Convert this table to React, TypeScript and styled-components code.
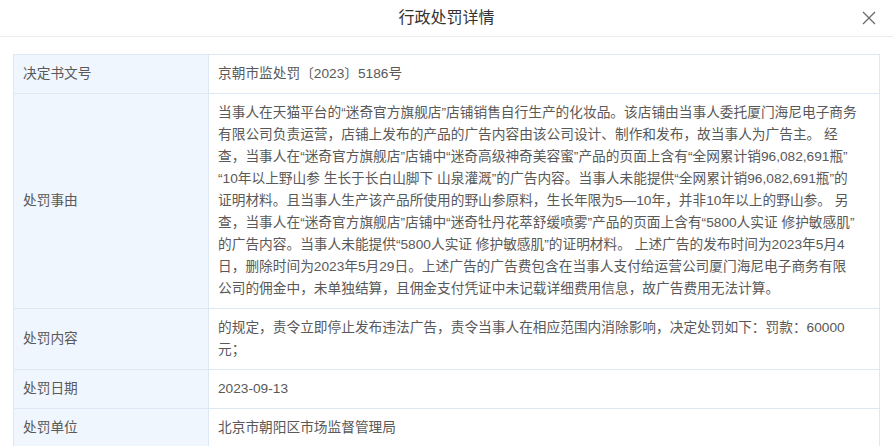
import React from "react";
import styled, { createGlobalStyle } from "styled-components";

const Global = createGlobalStyle`
  html, body { margin: 0; padding: 0; background: #fff; }
  body { font-family: "Liberation Sans", "Noto Sans CJK SC", sans-serif; }
`;

const Dialog = styled.div`
  width: 893px;
  height: 446px;
  overflow: hidden;
  background: #fff;
  display: flex;
  flex-direction: column;
`;

const Header = styled.div`
  height: 36px;
  border-bottom: 1px solid #ececec;
  display: flex;
  align-items: center;
  justify-content: center;
  position: relative;
  flex-shrink: 0;
`;

const Title = styled.div`
  font-size: 16px;
  color: #333;
  line-height: 36px;
`;

const Close = styled.button`
  position: absolute;
  right: 16px;
  top: 10px;
  width: 16px;
  height: 16px;
  padding: 0;
  border: none;
  background: transparent;
  display: flex;
  align-items: center;
  justify-content: center;
`;

const Body = styled.div`
  padding: 17px 13px 0 13px;
`;

const Table = styled.div`
  border: 1px solid #dde8f4;
  border-bottom: none;
  display: grid;
  grid-template-columns: 195px 1fr;
`;

const Label = styled.div`
  background: #f0f6fd;
  border-right: 1px solid #dde8f4;
  border-bottom: 1px solid #dde8f4;
  padding: 8px 9px;
  font-size: 13.7px;
  line-height: 22px;
  color: #595959;
  display: flex;
  align-items: center;
`;

const Value = styled.div`
  border-bottom: 1px solid #dde8f4;
  padding: 8px 8px 8px 9px;
  font-size: 13.7px;
  line-height: 22px;
  color: #595959;
  white-space: pre-line;
`;

const reason = [
  "当事人在天猫平台的“迷奇官方旗舰店”店铺销售自行生产的化妆品。该店铺由当事人委托厦门海尼电子商务",
  "有限公司负责运营，店铺上发布的产品的广告内容由该公司设计、制作和发布，故当事人为广告主。 经",
  "查，当事人在“迷奇官方旗舰店”店铺中“迷奇高级神奇美容蜜”产品的页面上含有“全网累计销96,082,691瓶”",
  "“10年以上野山参 生长于长白山脚下 山泉灌溉”的广告内容。当事人未能提供“全网累计销96,082,691瓶”的",
  "证明材料。且当事人生产该产品所使用的野山参原料，生长年限为5—10年，并非10年以上的野山参。 另",
  "查，当事人在“迷奇官方旗舰店”店铺中“迷奇牡丹花萃舒缓喷雾”产品的页面上含有“5800人实证 修护敏感肌”",
  "的广告内容。当事人未能提供“5800人实证 修护敏感肌”的证明材料。 上述广告的发布时间为2023年5月4",
  "日，删除时间为2023年5月29日。上述广告的广告费包含在当事人支付给运营公司厦门海尼电子商务有限",
  "公司的佣金中，未单独结算，且佣金支付凭证中未记载详细费用信息，故广告费用无法计算。",
].join("\n");

const content = [
  "的规定，责令立即停止发布违法广告，责令当事人在相应范围内消除影响，决定处罚如下：罚款：60000",
  "元；",
].join("\n");

const rows: [string, string][] = [
  ["决定书文号", "京朝市监处罚〔2023〕5186号"],
  ["处罚事由", reason],
  ["处罚内容", content],
  ["处罚日期", "2023-09-13"],
  ["处罚单位", "北京市朝阳区市场监督管理局"],
];

export default function App() {
  return (
    <>
      <Global />
      <Dialog>
        <Header>
          <Title>行政处罚详情</Title>
          <Close aria-label="close">
            <svg width="14" height="14" viewBox="0 0 14 14">
              <path d="M1 1 L13 13 M13 1 L1 13" stroke="#666" strokeWidth="1.2" fill="none" />
            </svg>
          </Close>
        </Header>
        <Body>
          <Table>
            {rows.map(([k, v]) => (
              <React.Fragment key={k}>
                <Label>{k}</Label>
                <Value>{v}</Value>
              </React.Fragment>
            ))}
          </Table>
        </Body>
      </Dialog>
    </>
  );
}
